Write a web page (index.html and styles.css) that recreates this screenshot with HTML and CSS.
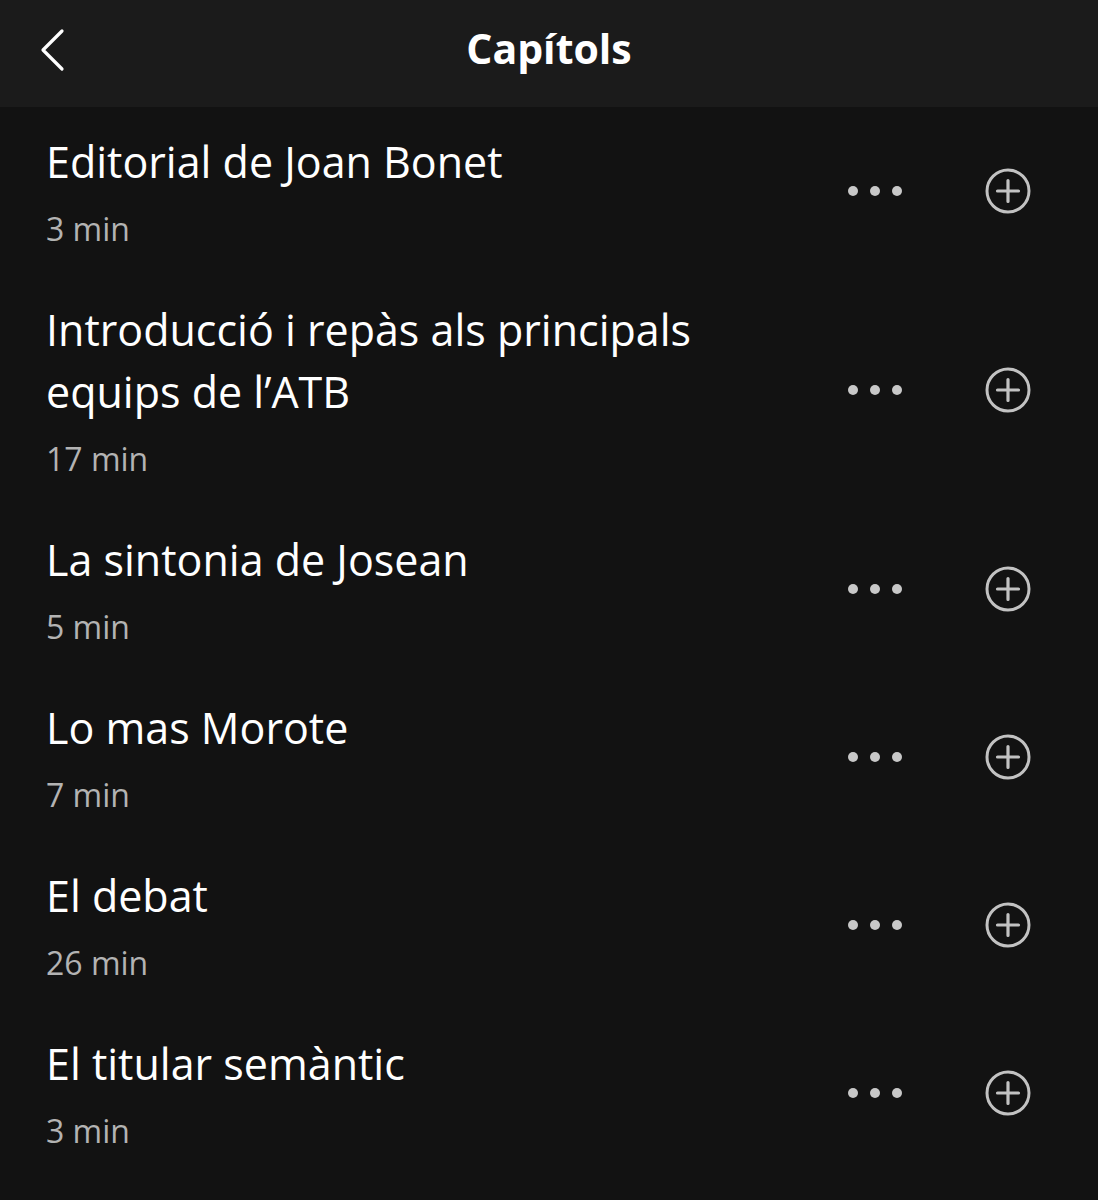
FILE: index.html
```html
<!DOCTYPE html>
<html lang="ca">
<head>
    <meta charset="UTF-8">
    <meta name="viewport" content="width=device-width, initial-scale=1.0">
    <title>Capítols</title>
    <link rel="stylesheet" href="styles.css">
</head>
<body>
    <div class="header">
        <button class="back-btn" aria-label="Enrere">
            <svg width="32" height="44" viewBox="0 0 32 44">
                <path d="M26 3 L7 22 L26 41" fill="none" stroke="#fff" stroke-width="3.2" stroke-linecap="round" stroke-linejoin="round"/>
            </svg>
        </button>
        <h1>Capítols</h1>
    </div>

    <div class="chapters">
        <div class="chapter">
            <div class="chapter-info">
                <div class="chapter-title">Editorial de Joan Bonet</div>
                <div class="chapter-time">3 min</div>
            </div>
            <div class="chapter-actions">
                <span class="more"><i></i><i></i><i></i></span>
                <svg class="add" width="46" height="46" viewBox="0 0 46 46">
                    <circle cx="23" cy="23" r="21" fill="none" stroke="#c2c2c2" stroke-width="3"/>
                    <path d="M23 12.5 V33.5 M12.5 23 H33.5" stroke="#c2c2c2" stroke-width="3.2" stroke-linecap="round"/>
                </svg>
            </div>
        </div>
        <div class="chapter">
            <div class="chapter-info">
                <div class="chapter-title">Introducció i repàs als principals<br>equips de l’ATB</div>
                <div class="chapter-time">17 min</div>
            </div>
            <div class="chapter-actions">
                <span class="more"><i></i><i></i><i></i></span>
                <svg class="add" width="46" height="46" viewBox="0 0 46 46">
                    <circle cx="23" cy="23" r="21" fill="none" stroke="#c2c2c2" stroke-width="3"/>
                    <path d="M23 12.5 V33.5 M12.5 23 H33.5" stroke="#c2c2c2" stroke-width="3.2" stroke-linecap="round"/>
                </svg>
            </div>
        </div>
        <div class="chapter">
            <div class="chapter-info">
                <div class="chapter-title">La sintonia de Josean</div>
                <div class="chapter-time">5 min</div>
            </div>
            <div class="chapter-actions">
                <span class="more"><i></i><i></i><i></i></span>
                <svg class="add" width="46" height="46" viewBox="0 0 46 46">
                    <circle cx="23" cy="23" r="21" fill="none" stroke="#c2c2c2" stroke-width="3"/>
                    <path d="M23 12.5 V33.5 M12.5 23 H33.5" stroke="#c2c2c2" stroke-width="3.2" stroke-linecap="round"/>
                </svg>
            </div>
        </div>
        <div class="chapter">
            <div class="chapter-info">
                <div class="chapter-title">Lo mas Morote</div>
                <div class="chapter-time">7 min</div>
            </div>
            <div class="chapter-actions">
                <span class="more"><i></i><i></i><i></i></span>
                <svg class="add" width="46" height="46" viewBox="0 0 46 46">
                    <circle cx="23" cy="23" r="21" fill="none" stroke="#c2c2c2" stroke-width="3"/>
                    <path d="M23 12.5 V33.5 M12.5 23 H33.5" stroke="#c2c2c2" stroke-width="3.2" stroke-linecap="round"/>
                </svg>
            </div>
        </div>
        <div class="chapter">
            <div class="chapter-info">
                <div class="chapter-title">El debat</div>
                <div class="chapter-time">26 min</div>
            </div>
            <div class="chapter-actions">
                <span class="more"><i></i><i></i><i></i></span>
                <svg class="add" width="46" height="46" viewBox="0 0 46 46">
                    <circle cx="23" cy="23" r="21" fill="none" stroke="#c2c2c2" stroke-width="3"/>
                    <path d="M23 12.5 V33.5 M12.5 23 H33.5" stroke="#c2c2c2" stroke-width="3.2" stroke-linecap="round"/>
                </svg>
            </div>
        </div>
        <div class="chapter">
            <div class="chapter-info">
                <div class="chapter-title">El titular semàntic</div>
                <div class="chapter-time">3 min</div>
            </div>
            <div class="chapter-actions">
                <span class="more"><i></i><i></i><i></i></span>
                <svg class="add" width="46" height="46" viewBox="0 0 46 46">
                    <circle cx="23" cy="23" r="21" fill="none" stroke="#c2c2c2" stroke-width="3"/>
                    <path d="M23 12.5 V33.5 M12.5 23 H33.5" stroke="#c2c2c2" stroke-width="3.2" stroke-linecap="round"/>
                </svg>
            </div>
        </div>
    </div>
</body>
</html>
```

FILE: styles.css
```css
body {
    margin: 0;
    background-color: #121212;
    color: #fff;
    font-family: "Open Sans", sans-serif;
}
.header {
    position: relative;
    height: 107px;
    background-color: #1b1b1b;
    display: flex;
    align-items: center;
    justify-content: center;
}
.header h1 {
    margin: 0 0 12px 0;
    font-size: 41px;
    font-weight: 700;
}
.back-btn {
    position: absolute;
    left: 36px;
    top: 28px;
    padding: 0;
    background: none;
    border: none;
    cursor: pointer;
}
.chapter {
    display: flex;
    align-items: center;
    padding: 24px 67px 24px 46px;
}
.chapter-info {
    flex: 1;
}
.chapter-title {
    font-size: 43px;
    line-height: 62px;
}
.chapter-time {
    margin-top: 14px;
    font-size: 32px;
    line-height: 44px;
    color: #b3b3b3;
}
.chapter-actions {
    display: flex;
    align-items: center;
    gap: 83px;
}
.more {
    display: flex;
    gap: 12px;
}
.more i {
    width: 10px;
    height: 10px;
    border-radius: 50%;
    background-color: #c8c8c8;
}
.add {
    display: block;
}
```
